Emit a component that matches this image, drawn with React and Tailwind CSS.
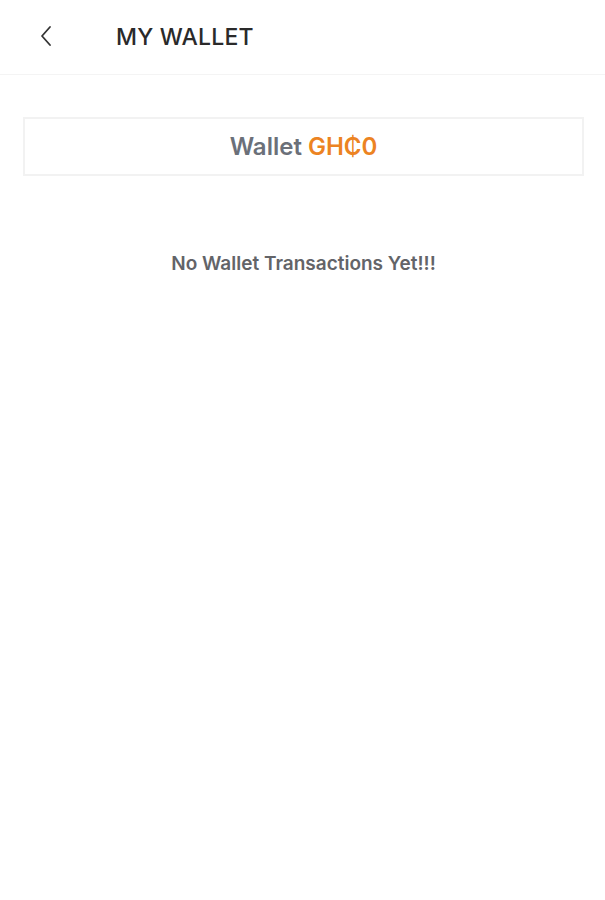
export default function App() {
  return (
    <div className="min-h-[900px] w-full bg-white" style={{ fontFamily: 'Inter, Roboto, "Liberation Sans", sans-serif' }}>
      <header className="h-[75px] flex items-center border-b border-[#f4f4f4]">
        <button className="ml-[36px] mt-[-2px] w-[20px] h-[24px] flex items-center justify-center text-[#333]">
          <svg width="14" height="22" viewBox="0 0 14 22" fill="none" stroke="currentColor" strokeWidth="1.8" strokeLinecap="round" strokeLinejoin="round">
            <path d="M11 2 L3 11 L11 20" />
          </svg>
        </button>
        <h1 className="ml-[60px] text-[23px] tracking-[0.2px] text-[#2a2a2a] font-medium">
          MY WALLET
        </h1>
      </header>

      <main className="pl-[23px] pr-[21px] pt-[42px]">
        <div className="h-[59px] border-2 border-[#f2f2f2] flex items-center justify-center">
          <p className="text-[24px] font-semibold">
            <span className="text-[#6b7079]">Wallet </span>
            <span className="text-[#ec8322]">GH₵0</span>
          </p>
        </div>

        <p className="mt-[74px] text-center text-[19px] font-semibold text-[#636468]">
          No Wallet Transactions Yet!!!
        </p>
      </main>
    </div>
  )
}
